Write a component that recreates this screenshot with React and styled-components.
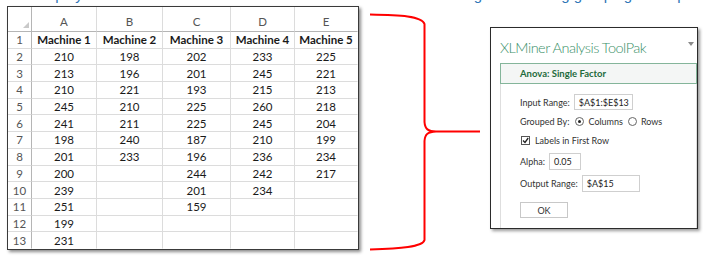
import React from "react";
import styled, { createGlobalStyle } from "styled-components";

const GlobalStyle = createGlobalStyle`
  html, body {
    margin: 0;
    padding: 0;
    background: #fff;
  }
  body {
    width: 703px;
    height: 259px;
    overflow: hidden;
    font-family: "Lato", "Liberation Sans", sans-serif;
  }
`;

const letters = ["A", "B", "C", "D", "E"];
const headers = ["Machine 1", "Machine 2", "Machine 3", "Machine 4", "Machine 5"];
const data = [
  [210, 198, 202, 233, 225],
  [213, 196, 201, 245, 221],
  [210, 221, 193, 215, 213],
  [245, 210, 225, 260, 218],
  [241, 211, 225, 245, 204],
  [198, 240, 187, 210, 199],
  [201, 233, 196, 236, 234],
  [200, "", 244, 242, 217],
  [239, "", 201, 234, ""],
  [251, "", 159, "", ""],
  [199, "", "", "", ""],
  [231, "", "", "", ""],
];

const Caption = styled.div`
  height: 4px;
  overflow: hidden;
  white-space: nowrap;
  color: #2e75b6;
  font-family: "Liberation Sans", Arial, sans-serif;
  font-size: 15px;
  line-height: 16px;
`;

const CaptionLine = styled.div`
  margin-top: -13px;
  padding-left: 36px;
`;

const Stage = styled.div`
  display: flex;
  align-items: flex-start;
`;

const Sheet = styled.div`
  margin: 2px 0 0 7px;
  width: 352px;
  height: 244px;
  box-sizing: border-box;
  border: 1px solid #3a3a3a;
  box-shadow: 2px 2px 3px rgba(0, 0, 0, 0.45);
  background: #fff;
  display: grid;
  grid-template-columns: 24px 65px 66px 68px 64px 1fr;
  grid-template-rows: 25px repeat(13, 1fr);
  font-family: "Lato", "Liberation Sans", sans-serif;
`;

const Cell = styled.div`
  display: flex;
  align-items: center;
  justify-content: center;
  box-sizing: border-box;
  border-right: 1px solid ${(p) => (p.$last ? "transparent" : "#dcdcdc")};
  border-bottom: 1px solid ${(p) => (p.$bottom ? "transparent" : "#dcdcdc")};
  font-size: 11.5px;
  font-weight: ${(p) => (p.$bold ? 700 : 400)};
  color: #1a1a1a;
`;

const ColHead = styled(Cell)`
  align-items: flex-end;
  padding-bottom: 3px;
  color: #555;
  border-bottom-color: #b5b5b5;
`;

const Corner = styled(ColHead)`
  justify-content: flex-end;
  padding: 0 2px 3px 0;
  border-right-color: #b5b5b5;
`;

const RowHead = styled(Cell)`
  color: #555;
  border-right-color: #b5b5b5;
`;

const Brace = styled.svg`
  flex: none;
  display: block;
`;

const Pane = styled.div`
  margin-top: 23px;
  width: 208px;
  height: 202px;
  box-sizing: border-box;
  border: 1px solid #2b2b2b;
  box-shadow: 2px 2px 3px rgba(0, 0, 0, 0.4);
  background: #fff;
  display: flex;
  flex-direction: column;
  font-family: "Lato", "Liberation Sans", sans-serif;
`;

const TitleBar = styled.div`
  height: 35px;
  box-sizing: border-box;
  padding: 3px 3px 0 9px;
  display: flex;
  align-items: center;
  justify-content: space-between;
`;

const Title = styled.div`
  font-size: 14.5px;
  font-weight: 300;
  letter-spacing: -0.5px;
  color: #3a9069;
  white-space: nowrap;
`;

const Caret = styled.span`
  width: 0;
  height: 0;
  margin-top: -6px;
  border-left: 3px solid transparent;
  border-right: 3px solid transparent;
  border-top: 4px solid #8a8a8a;
`;

const SectionHead = styled.div`
  margin-left: 9px;
  height: 21px;
  box-sizing: border-box;
  border: 1px solid #84b59a;
  background: #f4f6f5;
  padding-left: 19px;
  display: flex;
  align-items: center;
  font-size: 9.5px;
  font-weight: 700;
  color: #1f6b3c;
`;

const Body = styled.div`
  flex: 1;
  margin-left: 9px;
  border-left: 1px solid #dedede;
  border-right: 1px solid #dedede;
  padding: 10px 0 0 19px;
  display: flex;
  flex-direction: column;
  align-items: flex-start;
`;

const Field = styled.div`
  display: flex;
  align-items: center;
  gap: ${(p) => p.$gap ?? 4}px;
  height: ${(p) => p.$h ?? 16}px;
  margin-top: ${(p) => p.$mt ?? 0}px;
  font-size: 9px;
  color: #333;
  white-space: nowrap;
`;

const TextBox = styled.div`
  width: ${(p) => p.$w}px;
  height: 100%;
  box-sizing: border-box;
  border: 1px solid #cfcfcf;
  padding-left: 4px;
  display: flex;
  align-items: center;
  color: #222;
`;

const Radio = styled.span`
  width: 9px;
  height: 9px;
  box-sizing: border-box;
  border: 1px solid #666;
  border-radius: 50%;
  display: inline-flex;
  align-items: center;
  justify-content: center;
  margin-left: ${(p) => p.$ml ?? 0}px;

  &::after {
    content: "";
    width: 3px;
    height: 3px;
    border-radius: 50%;
    background: ${(p) => (p.$on ? "#222" : "transparent")};
  }
`;

const Check = styled.span`
  width: 9px;
  height: 9px;
  box-sizing: border-box;
  border: 1px solid #555;
  display: inline-flex;
  margin-left: 1px;
`;

const Button = styled.div`
  margin-top: 10px;
  width: 48px;
  height: 16px;
  box-sizing: border-box;
  border: 1px solid #c8c8c8;
  display: flex;
  align-items: center;
  justify-content: center;
  font-size: 9px;
  color: #333;
`;

export default function App() {
  return (
    <>
      <GlobalStyle />
      <Caption>
        <CaptionLine>
          display. The ANOVA test is then run on the data shown below using the following grouping and input options, typically applied
        </CaptionLine>
      </Caption>
      <Stage>
        <Sheet>
          <Corner>
            <svg width="6" height="6" viewBox="0 0 6 6">
              <polygon points="6,0 6,6 0,6" fill="#c9c9c9" />
            </svg>
          </Corner>
          {letters.map((l, i) => (
            <ColHead key={l} $last={i === 4}>
              {l}
            </ColHead>
          ))}
          <RowHead>1</RowHead>
          {headers.map((h, i) => (
            <Cell key={h} $bold $last={i === 4}>
              {h}
            </Cell>
          ))}
          {data.map((row, r) => (
            <React.Fragment key={r}>
              <RowHead $bottom={r === data.length - 1}>{r + 2}</RowHead>
              {row.map((v, c) => (
                <Cell key={c} $last={c === 4} $bottom={r === data.length - 1}>
                  {v}
                </Cell>
              ))}
            </React.Fragment>
          ))}
        </Sheet>

        <Brace width="131" height="255" viewBox="359 4 131 255">
          <path
            d="M370,14.5 C400,15 422,16 424.5,24 L424.5,122 C425,129 428,131.5 436,131.5 L480,131.5 M436,131.5 C428,132 425,134 424.5,141 L424.5,240 C423,247 400,248.5 370,249.5"
            fill="none"
            stroke="#f00"
            strokeWidth="2"
          />
        </Brace>

        <Pane>
          <TitleBar>
            <Title>XLMiner Analysis ToolPak</Title>
            <Caret />
          </TitleBar>
          <SectionHead>Anova: Single Factor</SectionHead>
          <Body>
            <Field>
              Input Range:
              <TextBox $w={59}>$A$1:$E$13</TextBox>
            </Field>
            <Field $mt={3}>
              Grouped By:
              <Radio $on $ml={2} />
              Columns
              <Radio $ml={1} />
              Rows
            </Field>
            <Field $mt={3} $gap={5}>
              <Check>
                <svg width="7" height="7" viewBox="0 0 7 7">
                  <path d="M1,3.5 L3,5.5 L6.2,1" fill="none" stroke="#222" strokeWidth="1.3" />
                </svg>
              </Check>
              Labels in First Row
            </Field>
            <Field $mt={5} $h={17}>
              Alpha:
              <TextBox $w={32}>0.05</TextBox>
            </Field>
            <Field $mt={5} $h={17}>
              Output Range:
              <TextBox $w={58}>$A$15</TextBox>
            </Field>
            <Button>OK</Button>
          </Body>
        </Pane>
      </Stage>
    </>
  );
}
